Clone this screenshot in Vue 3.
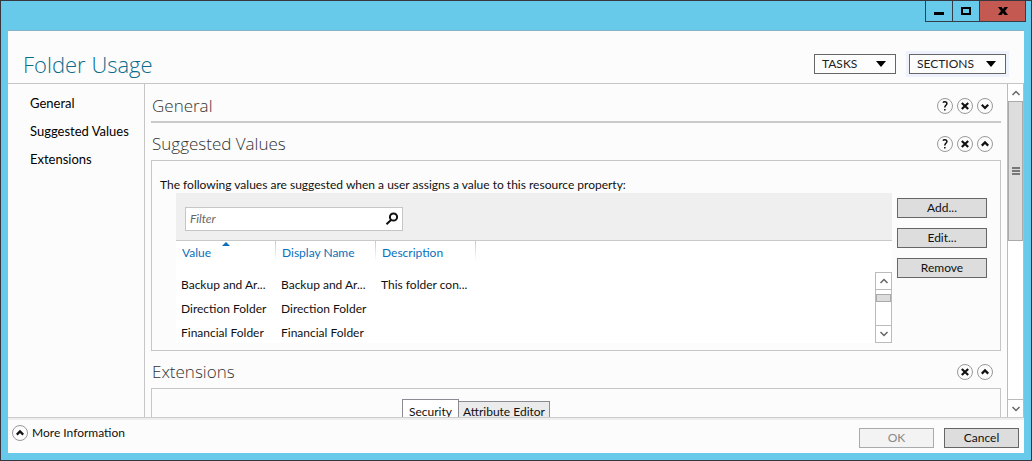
<script setup>
import { ref } from 'vue'

const filter = ref('')
const nav = ['General', 'Suggested Values', 'Extensions']
const columns = ['Value', 'Display Name', 'Description']
const rows = [
  ['Backup and Ar...', 'Backup and Ar...', 'This folder con...'],
  ['Direction Folder', 'Direction Folder', ''],
  ['Financial Folder', 'Financial Folder', ''],
]
const sections = [
  { title: 'General', icons: ['help', 'close', 'down'] },
  { title: 'Suggested Values', icons: ['help', 'close', 'up'] },
  { title: 'Extensions', icons: ['close', 'up'] },
]
const glyphs = {
  close: 'M4.8 5 11.2 11M11.2 5 4.8 11',
  up: 'M4.8 9.6 8 6.4 11.2 9.6',
  down: 'M4.8 6.8 8 10 11.2 6.8',
  help: 'M5.9 4.6Q6.5 3.8 7.8 3.8 9.900 3.8 9.900 5.6 9.900 6.700 8.800 7.400 7.800 8.100 7.800 9.600M7.800 10.900V12.500',
}
const labels = { close: 'Remove section', up: 'Collapse', down: 'Expand', help: 'Help' }
</script>

<template>
  <div class="window">
    <div class="titlebar">
      <button class="cap" aria-label="Minimize">
        <svg width="12" height="12"><path d="M1 7h10v3H1z" /></svg>
      </button>
      <button class="cap" aria-label="Maximize">
        <svg width="12" height="12"><path fill-rule="evenodd" d="M1 2h10v8H1zM3 4v4h6V4z" /></svg>
      </button>
      <button class="cap cap-close" aria-label="Close">
        <svg width="12" height="12"><path d="M1 2h3.500l1.500 2L7.500 2H11L8 6l3 4H7.500L6 8l-1.500 2H1l3-4z" /></svg>
      </button>
    </div>

    <div class="dialog">
      <header class="head">
        <h1>Folder Usage</h1>
        <button class="menu">TASKS <svg width="10" height="6"><path d="M0 0h10L5 6z" /></svg></button>
        <button class="menu focused">SECTIONS <svg width="10" height="6"><path d="M0 0h10L5 6z" /></svg></button>
      </header>

      <div class="body">
        <nav class="nav">
          <a v-for="n in nav" :key="n" href="#">{{ n }}</a>
        </nav>

        <main class="main">
          <section v-for="(s, i) in sections" :key="s.title" class="section">
            <div class="section-head">
              <h2>{{ s.title }}</h2>
              <button v-for="k in s.icons" :key="k" class="round" :aria-label="labels[k]">
                <svg width="16" height="16" viewBox="0 0 16 16">
                  <circle cx="8" cy="8" r="7.500" />
                  <path :class="{ thin: k === 'help' }" :d="glyphs[k]" />
                </svg>
              </button>
            </div>

            <div v-if="i === 0" class="rule"></div>

            <div v-else-if="i === 1" class="panel values">
              <p>The following values are suggested when a user assigns a value to this resource property:</p>
              <div class="values-row">
                <div class="list">
                  <div class="filterbar">
                    <label class="filter">
                      <input v-model="filter" type="text" placeholder="Filter" aria-label="Filter" />
                      <svg width="14" height="14" viewBox="0 0 14 14">
                        <circle cx="8.500" cy="5" r="3.600" />
                        <path d="M6 8 1.500 12.300" />
                      </svg>
                    </label>
                  </div>
                  <table>
                    <thead>
                      <tr>
                        <th v-for="(c, j) in columns" :key="c" scope="col">
                          <svg v-if="j === 0" class="sort" width="8" height="4"><path d="M4 0 8 4H0z" /></svg>
                          {{ c }}
                        </th>
                      </tr>
                    </thead>
                    <tbody>
                      <tr v-for="r in rows" :key="r[0]">
                        <td v-for="(c, j) in r" :key="j">{{ c }}</td>
                      </tr>
                    </tbody>
                  </table>
                  <div class="scroll inner">
                    <button aria-label="Scroll list up"><svg width="10" height="6"><path d="M1.500 5 5 1.500 8.500 5" /></svg></button>
                    <div class="track"><div class="thumb"></div></div>
                    <button aria-label="Scroll list down"><svg width="10" height="6"><path d="M1.500 1 5 4.500 8.500 1" /></svg></button>
                  </div>
                </div>
                <div class="actions">
                  <button class="btn">Add...</button>
                  <button class="btn">Edit...</button>
                  <button class="btn">Remove</button>
                </div>
              </div>
            </div>

            <div v-else class="panel tabs" role="tablist">
              <button class="tab active" role="tab" aria-selected="true">Security</button>
              <button class="tab" role="tab" aria-selected="false">Attribute Editor</button>
            </div>
          </section>
        </main>

        <div class="scroll outer">
          <button aria-label="Scroll up"><svg width="10" height="6"><path d="M1.500 5 5 1.500 8.500 5" /></svg></button>
          <div class="track">
            <div class="thumb"><svg width="8" height="8"><path d="M0 1h8M0 4h8M0 7h8" /></svg></div>
          </div>
          <button aria-label="Scroll down"><svg width="10" height="6"><path d="M1.500 1 5 4.500 8.500 1" /></svg></button>
        </div>
      </div>

      <footer class="foot">
        <button class="more">
          <svg width="16" height="16" viewBox="0 0 16 16">
            <circle cx="8" cy="8" r="7.500" />
            <path :d="glyphs.up" />
          </svg>
          More Information
        </button>
        <button class="btn" disabled>OK</button>
        <button class="btn">Cancel</button>
      </footer>
    </div>
  </div>
</template>

<style>
body {
  margin: 0;
}
</style>

<style scoped>
.window,
.window * {
  box-sizing: border-box;
}
.window {
  height: 100vh;
  display: flex;
  flex-direction: column;
  border: 1px solid #37383f;
  background: #67caea;
  font: 12px/16px Lato, "Open Sans", sans-serif;
  color: #111;
}
button {
  padding: 0;
  border: 0;
  background: none;
  font: inherit;
  color: inherit;
}
h1,
h2,
p {
  margin: 0;
}
.titlebar {
  height: 29px;
  flex: none;
  display: flex;
  justify-content: flex-end;
  align-items: flex-start;
  padding-right: 5px;
}
.cap {
  width: 27px;
  height: 21px;
  display: flex;
  align-items: center;
  justify-content: center;
  border: solid #333c47;
  border-width: 0 0 1px 1px;
}
.cap-close {
  width: 47px;
  border-right-width: 1px;
  background: #c35951;
}
.dialog {
  flex: 1;
  min-height: 0;
  display: flex;
  flex-direction: column;
  margin: 0 7px 7px;
  border-top: 1px solid #86b2c6;
  background: #fcfcfc;
}
.head {
  height: 53px;
  flex: none;
  display: flex;
  align-items: center;
  gap: 13px;
  padding: 14px 18px 0 15px;
  border-bottom: 1px solid #c6c6c6;
}
h1 {
  flex: 1;
  font: 300 22px/32px "Open Sans", sans-serif;
  color: #0b6c8c;
}
.menu {
  height: 20px;
  min-width: 82px;
  display: flex;
  align-items: center;
  justify-content: space-between;
  padding: 0 9px 0 7px;
  border: 1px solid #666;
  background: #fdfdfd;
  color: #222;
}
.menu.focused {
  min-width: 97px;
  box-shadow: 0 0 0 3px #eef2fd;
}
.body {
  flex: 1;
  min-height: 0;
  display: flex;
}
.nav {
  width: 137px;
  flex: none;
  display: flex;
  flex-direction: column;
  gap: 12px;
  padding: 11px 0 0 22px;
  border-right: 1px solid #c6c6c6;
}
.nav a {
  font-size: 13px;
  color: #000;
  text-decoration: none;
  white-space: nowrap;
}
.main {
  flex: 1;
  min-width: 0;
  overflow: hidden;
  padding: 6px 6px 0;
}
.section-head {
  height: 31px;
  display: flex;
  align-items: center;
  gap: 4px;
  padding-right: 8px;
}
.section + .section .section-head {
  height: 37px;
  padding-top: 5px;
}
h2 {
  flex: 1;
  padding-left: 1px;
  font: 300 17px/24px "Open Sans", sans-serif;
  color: #333;
}
.round {
  width: 16px;
  height: 16px;
}
.round svg,
.more svg {
  display: block;
  fill: none;
  stroke: #111;
  stroke-width: 2.2;
}
.round circle,
.more circle {
  stroke: #999;
  stroke-width: 1;
}
.round .thin {
  stroke-width: 1.5;
}
.rule {
  height: 2px;
  background: #c9c9c9;
}
.panel {
  border: 1px solid #c6c6c6;
}
.values {
  padding: 16px 13px 7px 8px;
}
.values-row {
  display: flex;
  gap: 5px;
  padding-left: 16px;
}
.list {
  flex: 1;
  position: relative;
  height: 150px;
  background: #fff;
}
.filterbar {
  height: 48px;
  padding: 14px 9px 0;
  border-bottom: 1px solid #c9c9c9;
  background: #efefef;
}
.filter {
  width: 218px;
  height: 24px;
  display: flex;
  align-items: center;
  padding: 0 3px 0 4px;
  border: 1px solid #c6c6c6;
  background: #fff;
}
.filter input {
  flex: 1;
  min-width: 0;
  padding: 0;
  border: 0;
  outline: 0;
  background: none;
  font: inherit;
}
.filter input::placeholder {
  color: #666;
  font-style: italic;
  opacity: 1;
}
.filter svg {
  fill: none;
  stroke: #111;
  stroke-width: 2;
}
table {
  width: 300px;
  table-layout: fixed;
  border-collapse: collapse;
}
th,
td {
  padding: 0;
  text-align: left;
  white-space: nowrap;
}
th {
  position: relative;
  height: 32px;
  padding: 4px 0 0 6px;
  vertical-align: top;
  font-weight: 400;
  color: #0b6fbb;
  background: linear-gradient(#c9c9c9, #fff) right top / 1px 20px no-repeat;
}
.sort {
  position: absolute;
  top: 1px;
  left: 46px;
  fill: #0b6fbb;
}
td {
  height: 24px;
  padding-left: 5px;
}
.scroll {
  display: flex;
  flex-direction: column;
  width: 17px;
  border: 1px solid #bbb;
  background: #fff;
}
.scroll button {
  height: 16px;
  flex: none;
  display: flex;
  align-items: center;
  justify-content: center;
}
.scroll button svg {
  fill: none;
  stroke: #666;
  stroke-width: 1.5;
}
.track {
  flex: 1;
}
.thumb {
  display: flex;
  align-items: center;
  justify-content: center;
  border: 1px solid #aaa;
  background: #ddd;
}
.thumb svg {
  stroke: #777;
  stroke-width: 2;
}
.inner {
  position: absolute;
  right: 0;
  bottom: 0;
  height: 71px;
}
.inner .track {
  padding-top: 4px;
  border: solid #bbb;
  border-width: 1px 0;
}
.inner .thumb {
  height: 8px;
}
.outer {
  border-width: 0 1px;
}
.scroll.outer button {
  height: 17px;
}
.outer .thumb {
  height: 47%;
}
.outer .track {
  border: solid #bbb;
  border-width: 0 0 1px;
}
.actions {
  width: 90px;
  display: flex;
  flex-direction: column;
  gap: 10px;
  padding-top: 5px;
}
.btn {
  height: 20px;
  border: 1px solid #666;
  background: #ddd;
}
.btn:disabled {
  border-color: #aaa;
  background: #f3f3f3;
  color: #888;
}
.tabs {
  height: 60px;
  display: flex;
  align-items: flex-start;
  padding: 10px 0 0 250px;
}
.tab {
  height: 22px;
  margin-top: 2px;
  padding: 0 4px;
  border: 1px solid #8b8b94;
  border-left: 0;
  background: #ebebeb;
}
.tab.active {
  height: 26px;
  margin-top: 0;
  padding: 0 6px;
  border-left: 1px solid #8b8b94;
  background: #fff;
}
.foot {
  flex: none;
  height: 36px;
  display: flex;
  align-items: center;
  gap: 10px;
  padding: 4px 5px 0 4px;
  border-top: 1px solid #ccc;
  box-shadow: inset 0 2px #eee;
}
.more {
  display: flex;
  align-items: center;
  gap: 4px;
  margin: 0 auto 10px 0;
}
.foot .btn {
  width: 75px;
}
</style>
